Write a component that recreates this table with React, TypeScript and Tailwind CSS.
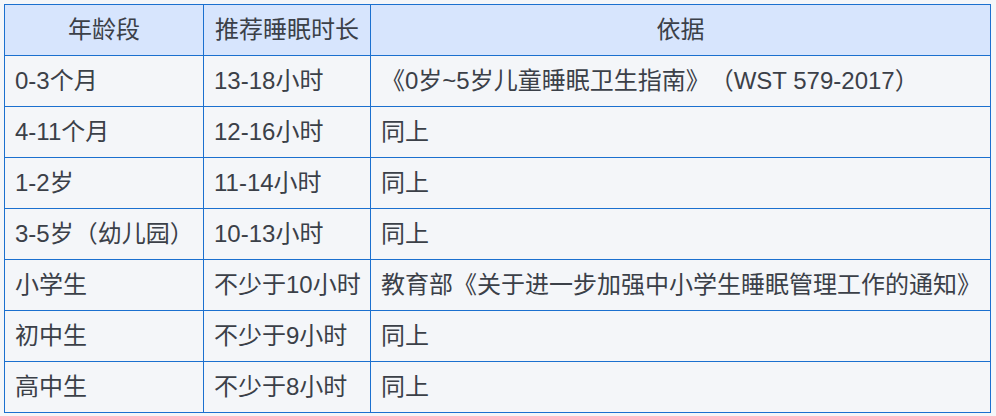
import React from 'react';

const rows: [string, string, string][] = [
  ['0-3个月', '13-18小时', '《0岁~5岁儿童睡眠卫生指南》（WST 579-2017）'],
  ['4-11个月', '12-16小时', '同上'],
  ['1-2岁', '11-14小时', '同上'],
  ['3-5岁（幼儿园）', '10-13小时', '同上'],
  ['小学生', '不少于10小时', '教育部《关于进一步加强中小学生睡眠管理工作的通知》'],
  ['初中生', '不少于9小时', '同上'],
  ['高中生', '不少于8小时', '同上'],
];

export default function App() {
  return (
    <div className="w-[996px] h-[416px] bg-[#f4f6f9] p-1 font-['Liberation_Sans','Noto_Sans_CJK_SC',sans-serif] text-[24px] leading-none text-[#3b4048] [text-spacing-trim:space-all]">
      <table className="table-fixed border-collapse w-[987px]">
        <colgroup>
          <col className="w-[199px]" />
          <col className="w-[167px]" />
          <col />
        </colgroup>
        <thead>
          <tr className="h-[51px] bg-[#d7e5fd]">
            <th className="border border-[#1b70cf] font-normal text-center">年龄段</th>
            <th className="border border-[#1b70cf] font-normal text-center">推荐睡眠时长</th>
            <th className="border border-[#1b70cf] font-normal text-center">依据</th>
          </tr>
        </thead>
        <tbody>
          {rows.map((r, i) => (
            <tr key={i} className="h-[51px]">
              <td className="border border-[#1b70cf] px-[10px] whitespace-nowrap">{r[0]}</td>
              <td className="border border-[#1b70cf] px-[10px] whitespace-nowrap">{r[1]}</td>
              <td className="border border-[#1b70cf] px-[10px] whitespace-nowrap">{r[2]}</td>
            </tr>
          ))}
        </tbody>
      </table>
    </div>
  );
}
